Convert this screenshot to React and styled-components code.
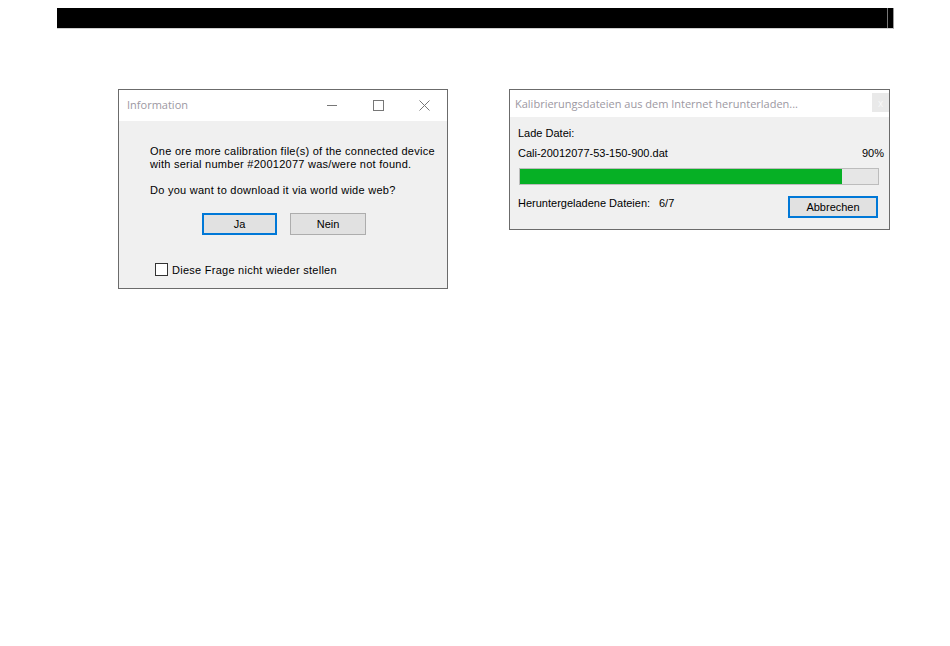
import React from "react";
import styled, { createGlobalStyle } from "styled-components";

const GlobalStyle = createGlobalStyle`
  html, body {
    margin: 0;
    padding: 0;
    background: #fff;
  }
  body {
    font-family: "Liberation Sans", Arial, sans-serif;
    font-size: 11px;
    color: #000;
  }
`;

const Page = styled.div`
  width: 950px;
  height: 646px;
  padding-top: 8px;
  box-sizing: border-box;
`;

const TopBar = styled.div`
  margin-left: 57px;
  width: 836px;
  height: 20px;
  background: #000;
  border-bottom: 1px solid #cfcfcf;
  border-right: 1px solid #9a9a9a;
  box-sizing: content-box;
  display: flex;
  justify-content: flex-end;
`;

const BarNotch = styled.div`
  width: 1px;
  height: 100%;
  background: #777;
  margin-right: 5px;
`;

const DialogRow = styled.div`
  display: flex;
  align-items: flex-start;
  margin-top: 60px;
  padding-left: 118px;
  gap: 61px;
`;

const Window = styled.div`
  width: ${(p) => p.$w}px;
  height: ${(p) => p.$h}px;
  box-sizing: border-box;
  border: 1px solid #6b6b6b;
  background: #f0f0f0;
  display: flex;
  flex-direction: column;
`;

const TitleBar = styled.div`
  height: ${(p) => p.$h}px;
  background: #fff;
  display: flex;
  align-items: center;
  padding-left: ${(p) => p.$pl}px;
  flex-shrink: 0;
`;

const TitleText = styled.div`
  flex: 1;
  font-family: "Open Sans", "Noto Sans", sans-serif;
  font-size: 11px;
  color: #9c98a2;
  margin-top: ${(p) => p.$mt || 0}px;
`;

const CaptionButton = styled.div`
  width: 46px;
  height: 30px;
  display: flex;
  align-items: center;
  justify-content: center;
`;

const SmallClose = styled.div`
  width: 17px;
  height: 19px;
  margin-top: -2px;
  background: #e9e9e9;
  color: #f8f8f8;
  font-family: "Open Sans", sans-serif;
  font-size: 10px;
  display: flex;
  align-items: center;
  justify-content: center;
`;

const InfoBody = styled.div`
  flex: 1;
  padding: 24px 0 0 31px;
  display: flex;
  flex-direction: column;
  letter-spacing: 0.26px;
`;

const Message = styled.p`
  margin: 0 0 ${(p) => p.$mb || 0}px 0;
  line-height: 13px;
`;

const ButtonRow = styled.div`
  display: flex;
  gap: 13px;
  margin-top: 16px;
  padding-left: 52px;
  letter-spacing: 0;
`;

const WinButton = styled.button`
  width: ${(p) => p.$w || 75}px;
  height: 22px;
  box-sizing: border-box;
  font-family: "Liberation Sans", Arial, sans-serif;
  font-size: 11px;
  color: #000;
  background: #e1e1e1;
  border: ${(p) => (p.$default ? "2px solid #0078d7" : "1px solid #adadad")};
  padding: 0;
  cursor: default;
`;

const CheckRow = styled.label`
  display: flex;
  align-items: center;
  gap: 4px;
  margin-top: 28px;
  margin-left: 5px;
`;

const CheckBox = styled.span`
  width: 13px;
  height: 13px;
  box-sizing: border-box;
  border: 1px solid #333;
  background: #fff;
`;

const ProgressBody = styled.div`
  flex: 1;
  padding: 10px 5px 0 8px;
  display: flex;
  flex-direction: column;
`;

const Line = styled.div`
  display: flex;
  justify-content: space-between;
  line-height: 13px;
  height: 13px;
  margin-bottom: ${(p) => p.$mb || 0}px;
`;

const Track = styled.div`
  margin: 8px 5px 0 1px;
  height: 17px;
  box-sizing: border-box;
  border: 1px solid #bcbcbc;
  background: #e6e6e6;
`;

const Fill = styled.div`
  height: 100%;
  background: #06b025;
`;

const BottomRow = styled.div`
  display: flex;
  align-items: flex-start;
  margin-top: 11px;
  padding-right: 6px;
`;

const Label = styled.span`
  line-height: 13px;
  margin-top: 1px;
  width: ${(p) => p.$w}px;
`;

const Spacer = styled.div`
  flex: 1;
`;

function Minimize() {
  return (
    <svg width="11" height="11" viewBox="0 0 11 11">
      <line x1="0" y1="5.5" x2="10" y2="5.5" stroke="#777" strokeWidth="1" />
    </svg>
  );
}

function Maximize() {
  return (
    <svg width="11" height="11" viewBox="0 0 11 11">
      <rect x="0.5" y="0.5" width="10" height="10" fill="none" stroke="#777" strokeWidth="1" />
    </svg>
  );
}

function CloseIcon() {
  return (
    <svg width="11" height="11" viewBox="0 0 11 11">
      <path d="M0.5 0.5 L10.5 10.5 M10.5 0.5 L0.5 10.5" stroke="#777" strokeWidth="1" />
    </svg>
  );
}

export default function App() {
  const progress = 90;
  return (
    <>
      <GlobalStyle />
      <Page>
        <TopBar>
          <BarNotch />
        </TopBar>

        <DialogRow>
          <Window $w={330} $h={200}>
            <TitleBar $h={31} $pl={8}>
              <TitleText $mt={-2}>Information</TitleText>
              <CaptionButton>
                <Minimize />
              </CaptionButton>
              <CaptionButton>
                <Maximize />
              </CaptionButton>
              <CaptionButton>
                <CloseIcon />
              </CaptionButton>
            </TitleBar>
            <InfoBody>
              <Message $mb={13}>
                One ore more calibration file(s) of the connected device
                <br />
                with serial number #20012077 was/were not found.
              </Message>
              <Message>Do you want to download it via world wide web?</Message>
              <ButtonRow>
                <WinButton $default>Ja</WinButton>
                <WinButton $w={76}>Nein</WinButton>
              </ButtonRow>
              <CheckRow>
                <CheckBox />
                Diese Frage nicht wieder stellen
              </CheckRow>
            </InfoBody>
          </Window>

          <Window $w={381} $h={141}>
            <TitleBar $h={27} $pl={5}>
              <TitleText>Kalibrierungsdateien aus dem Internet herunterladen...</TitleText>
              <SmallClose>x</SmallClose>
            </TitleBar>
            <ProgressBody>
              <Line $mb={7}>Lade Datei:</Line>
              <Line>
                <span>Cali-20012077-53-150-900.dat</span>
                <span>{progress}%</span>
              </Line>
              <Track>
                <Fill style={{ width: `${progress}%` }} />
              </Track>
              <BottomRow>
                <Label $w={141}>Heruntergeladene Dateien:</Label>
                <Label>6/7</Label>
                <Spacer />
                <WinButton $default $w={90}>
                  Abbrechen
                </WinButton>
              </BottomRow>
            </ProgressBody>
          </Window>
        </DialogRow>
      </Page>
    </>
  );
}
